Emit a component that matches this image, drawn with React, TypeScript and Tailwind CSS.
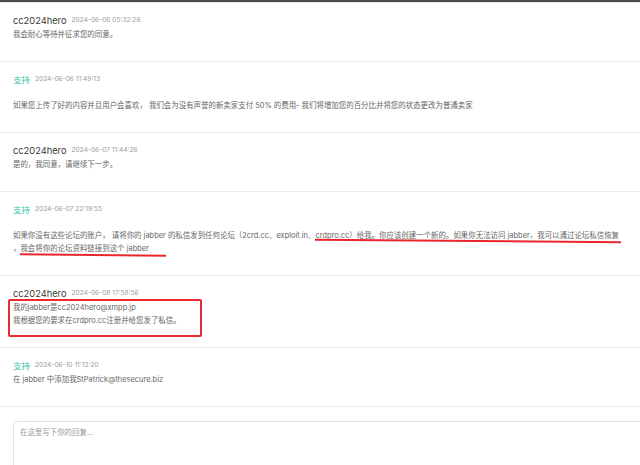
import React from "react";

type ReplyProps = {
  author: string;
  date: string;
  staff?: boolean;
  spaced?: boolean;
  children: React.ReactNode;
};

// one entry of the ticket thread: author line, then the message body
function Reply({ author, date, staff, spaced, children }: ReplyProps) {
  return (
    <div className="border-b border-[#ececec] px-[13px] pt-[11px] pb-[20px]">
      <div className="flex h-[14px] items-center gap-[5px]">
        {staff ? (
          <span className="text-[8.5px] text-[#36c6a2]">{author}</span>
        ) : (
          <span className="text-[9.3px] font-normal text-[#3a3a3a]">{author}</span>
        )}
        <span className="text-[6.6px] text-[#9a9a9a]">{date}</span>
      </div>
      <div
        className={
          spaced
            ? "mt-[12px] text-[7.45px] leading-[13px] text-[#666]"
            : "text-[7.45px] leading-[13px] text-[#666]"
        }
      >
        {children}
      </div>
    </div>
  );
}

export default function App() {
  return (
    <div className="h-[465px] w-[640px] overflow-hidden bg-white font-[Inter,'Noto_Sans_CJK_SC',sans-serif]">
      <div className="h-[2px] bg-[#4d4d4d]"></div>
      <div className="h-px bg-[#e6e6e6]"></div>

      <Reply author="cc2024hero" date="2024-06-06 05:32:26">
        我会耐心等待并征求您的同意。
      </Reply>

      <Reply author="支持" date="2024-06-06 11:49:13" staff spaced>
        如果您上传了好的内容并且用户会喜欢， 我们会为没有声誉的新卖家支付 50% 的费用- 我们将增加您的百分比并将您的状态更改为普通卖家
      </Reply>

      <Reply author="cc2024hero" date="2024-06-07 11:44:26">
        是的，我同意，请继续下一步。
      </Reply>

      <Reply author="支持" date="2024-06-07 22:19:55" staff spaced>
        <div className="whitespace-nowrap">
          如果你没有这些论坛的账户， 请将你的 jabber 的私信发到任何论坛（2crd.cc、exploit.in、
          <span className="relative">
            crdpro.cc）给我。你应该创建一个新的。如果你无法访问 jabber，我可以通过论坛私信恢复
            <span className="absolute -bottom-[2px] left-0 h-[2px] w-[calc(100%+2px)] rotate-[0.5deg] bg-[#e8262d]"></span>
          </span>
        </div>
        <div className="whitespace-nowrap">
          ，
          <span className="relative">
            我会将你的论坛资料链接到这个 jabber
            <span className="absolute -bottom-[3px] left-0 h-[2px] w-[calc(100%+18px)] rotate-[0.6deg] bg-[#e8262d]"></span>
          </span>
        </div>
      </Reply>

      <Reply author="cc2024hero" date="2024-06-08 17:58:56">
        <div className="relative">
          <div className="absolute -left-[5px] -top-[2px] h-[38px] w-[194px] rounded-[2px] border-2 border-[#ea2a30]"></div>
          <div>我的jabber是cc2024hero@xmpp.jp</div>
          <div>我根据您的要求在crdpro.cc注册并给您发了私信。</div>
        </div>
      </Reply>

      <Reply author="支持" date="2024-06-10 11:13:20" staff>
        在 jabber 中添加我StPatrick@thesecure.biz
      </Reply>

      <div className="px-[13px] pt-[14px]">
        <textarea
          className="h-[120px] w-[700px] resize-none rounded-[4px] border border-[#e2e2e2] px-[6px] py-[4px] text-[7.45px] leading-[13px] text-[#666] outline-none placeholder:text-[#9a9a9a]"
          placeholder="在这里写下你的回复..."
        ></textarea>
      </div>
    </div>
  );
}
